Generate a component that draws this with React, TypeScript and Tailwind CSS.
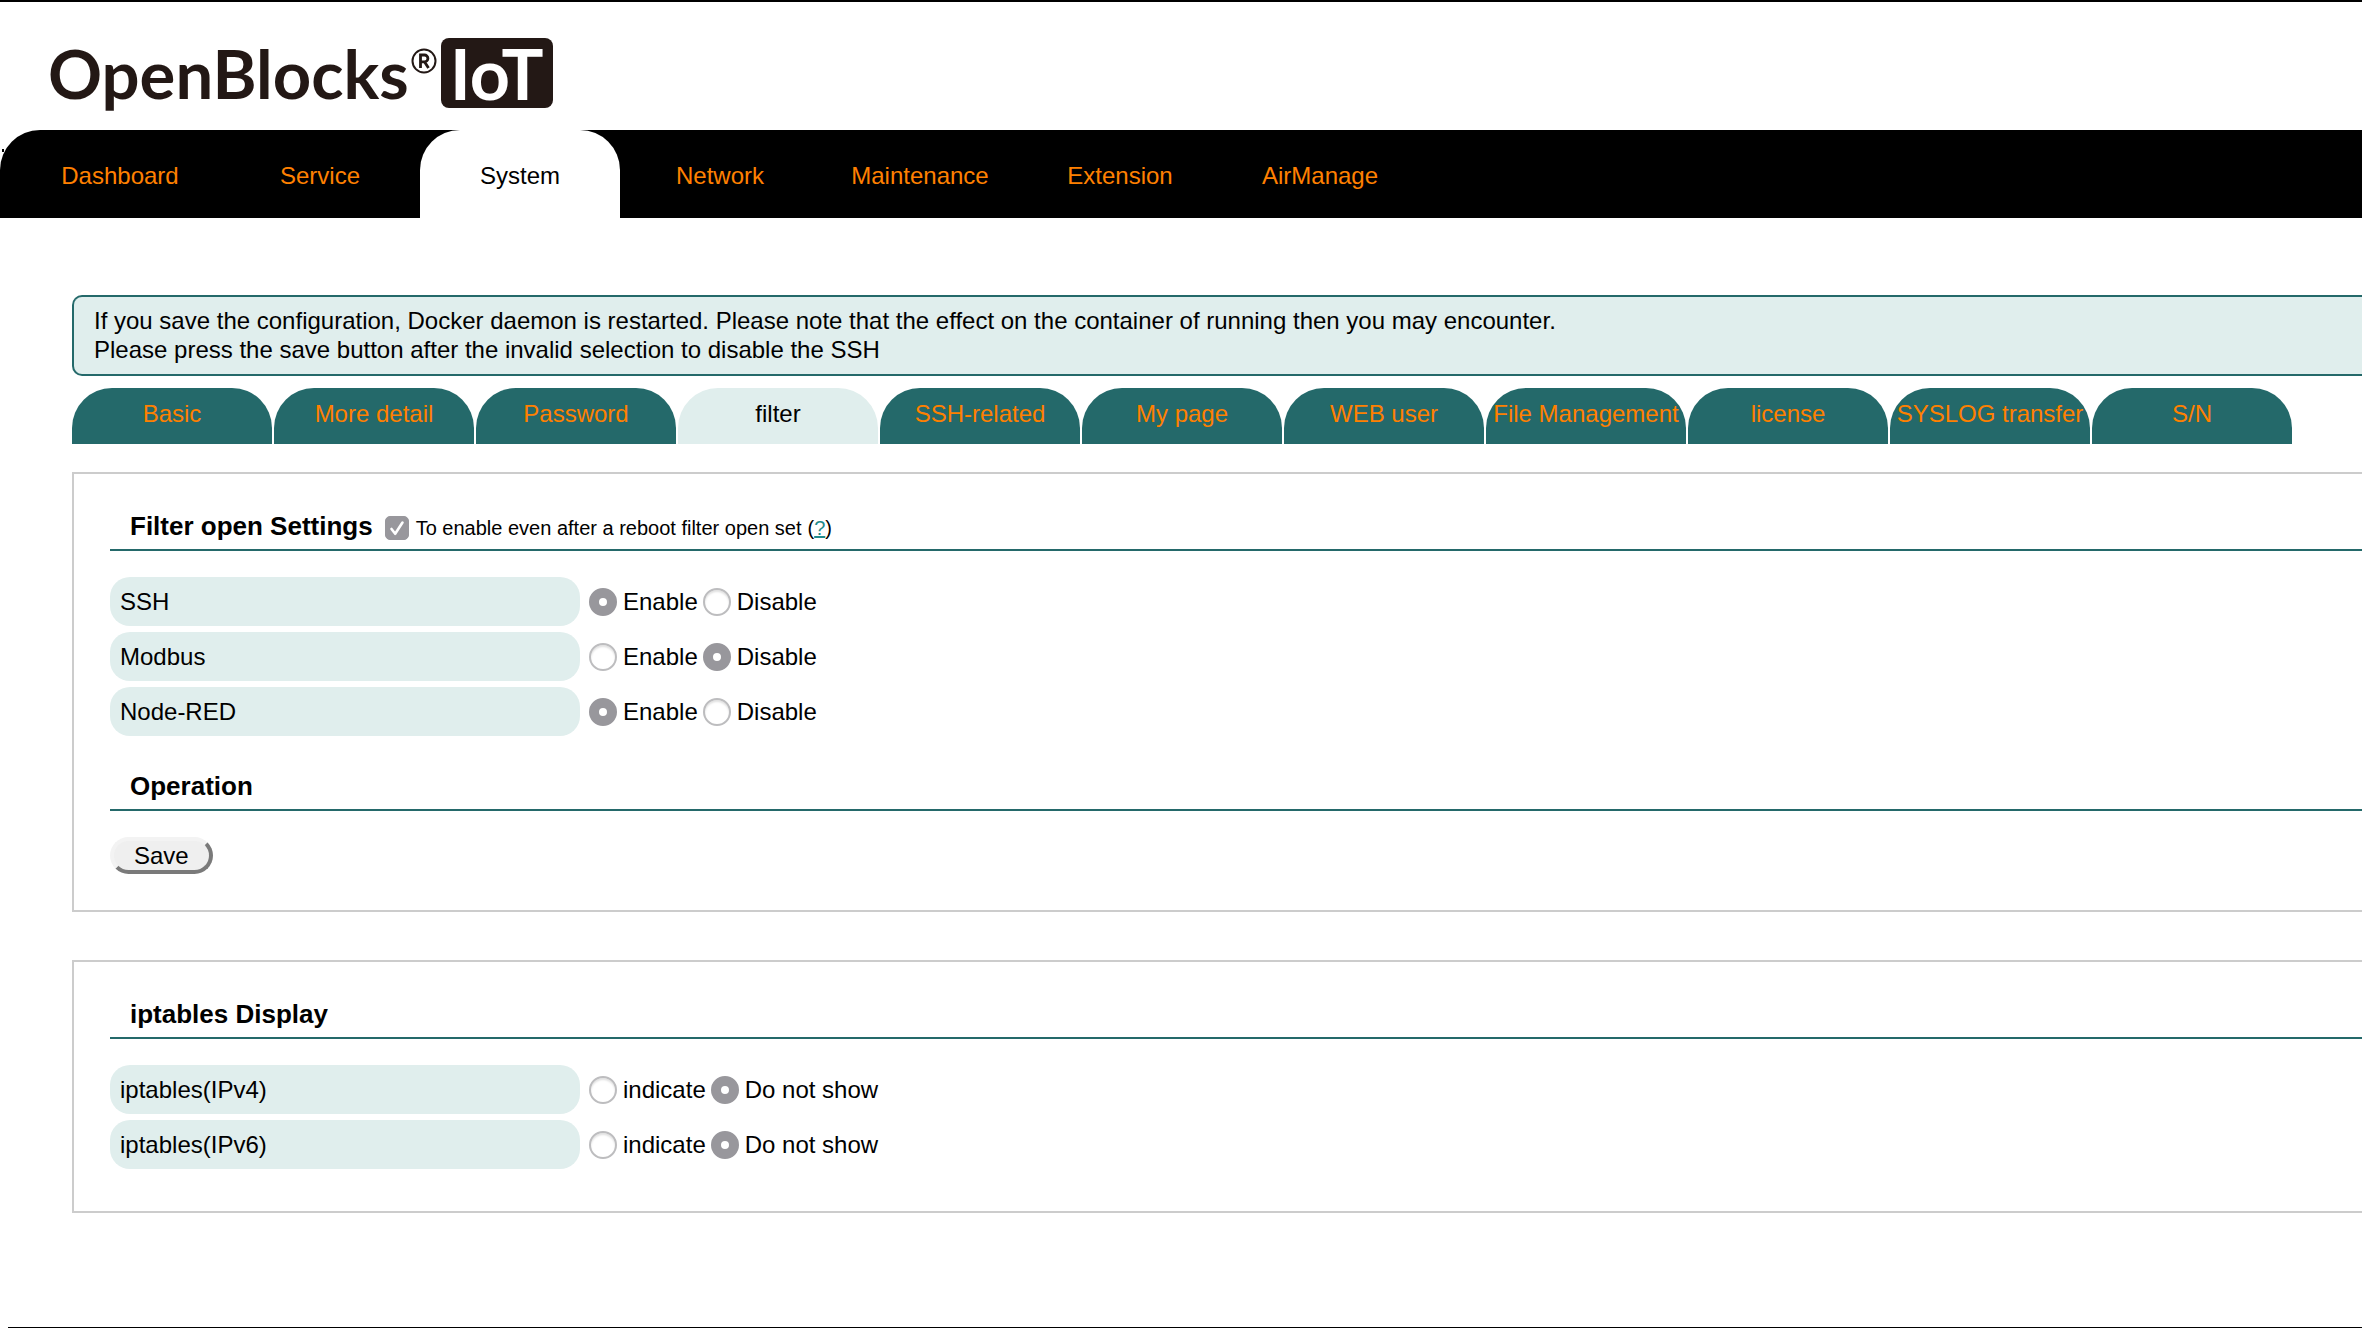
import React from "react";

const mainNav = ["Dashboard", "Service", "System", "Network", "Maintenance", "Extension", "AirManage"];

const subNav = [
  "Basic",
  "More detail",
  "Password",
  "filter",
  "SSH-related",
  "My page",
  "WEB user",
  "File Management",
  "license",
  "SYSLOG transfer",
  "S/N",
];

function Logo() {
  return (
    <a href="#home" className="flex w-fit items-start pt-9 pl-12 font-[Lato] font-bold text-[#231815]">
      <span className="text-[67px] leading-[70px]">OpenBlocks</span>
      <svg className="mt-2.5 ml-0.5 size-[26px]" viewBox="0 0 26 26" fill="none" stroke="#231815" aria-label="Registered">
        <circle cx="13" cy="13" r="11.5" strokeWidth="2" />
        <path d="M9.5 20V7h4a3.3 3.3 0 0 1 0 6.8h-4M13.5 13.8L17.5 20" strokeWidth="2.8" />
      </svg>
      <span className="ml-1 flex h-[70px] w-28 items-center justify-center rounded-lg bg-[#231815] text-[70px] leading-[70px] text-white">
        IoT
      </span>
    </a>
  );
}

function SectionHeading({ children }: { children: React.ReactNode }) {
  return (
    <div className="mb-[26px] flex h-10 items-baseline border-b-2 border-[#24696a] pl-5 leading-[30px]">
      {children}
    </div>
  );
}

function Choice({ name, label, checked }: { name: string; label: string; checked: boolean }) {
  return (
    <label className="flex items-center gap-1.5">
      <input
        type="radio"
        name={name}
        defaultChecked={checked}
        className="size-7 appearance-none rounded-full border-2 border-[#bdbdbf] bg-white shadow-[inset_0_2px_2px_#e2e2e2] checked:border-[10px] checked:border-[#98979c] checked:shadow-none"
      />
      {label}
    </label>
  );
}

function SettingRow({ title, options, value }: { title: string; options: string[]; value: number }) {
  return (
    <div role="radiogroup" aria-label={title} className="mb-1.5 flex items-center">
      <div className="flex h-[49px] w-[470px] items-center rounded-[20px] bg-[#e0eeed] pl-2.5">{title}</div>
      <div className="ml-[9px] flex gap-[5px]">
        {options.map((o, i) => (
          <Choice key={o} name={title} label={o} checked={i === value} />
        ))}
      </div>
    </div>
  );
}

function Panel({ children }: { children: React.ReactNode }) {
  return <section className="border-2 border-r-0 border-[#cccccc] pt-[37px] pb-9 pl-9">{children}</section>;
}

export default function App() {
  return (
    <div className="flex min-h-screen flex-col overflow-x-hidden border-t-2 border-black bg-white font-['Liberation_Sans',sans-serif] text-2xl leading-[29px] text-black">
      <header>
        <div className="h-32">
          <Logo />
        </div>
        <nav className="relative">
          <span className="absolute top-[19px] left-0.5 h-[3px] w-0.5 bg-black" />
          <ul className="flex h-[88px] rounded-tl-[40px] bg-black pl-5">
            {mainNav.map((item) => (
              <li key={item} className="w-[200px]">
                <a
                  href={"#" + item}
                  className={
                    item === "System"
                      ? "flex h-full items-center justify-center rounded-t-[40px] bg-white pt-0.5 text-black"
                      : "flex h-full items-center justify-center pt-0.5 text-[#ff8000]"
                  }
                >
                  {item}
                </a>
              </li>
            ))}
          </ul>
        </nav>
      </header>

      <main className="grow pt-[77px] pl-[72px]">
        <p className="rounded-l-[10px] border-2 border-r-0 border-[#24696a] bg-[#e0eeed] pt-[9px] pb-2.5 pl-5">
          If you save the configuration, Docker daemon is restarted. Please note that the effect on the container of
          running then you may encounter.
          <br />
          Please press the save button after the invalid selection to disable the SSH
        </p>

        <nav className="mt-3">
          <ul className="flex gap-0.5">
            {subNav.map((item) => (
              <li key={item} className="w-[200px] shrink-0">
                <a
                  href={"#" + item}
                  className={
                    item === "filter"
                      ? "flex h-14 justify-center rounded-t-[40px] bg-[#e0eeed] pt-[11px] whitespace-nowrap text-black"
                      : "flex h-14 justify-center rounded-t-[40px] bg-[#24696a] pt-[11px] whitespace-nowrap text-[#ff8000]"
                  }
                >
                  {item}
                </a>
              </li>
            ))}
          </ul>
        </nav>

        <div className="mt-7 flex flex-col gap-12">
          <Panel>
            <SectionHeading>
              <h2 className="text-[26px] font-bold">Filter open Settings</h2>
              <span className="ml-3 flex items-baseline text-xl leading-[30px]">
                <label className="flex items-baseline gap-[7px]">
                  <span className="relative size-6 self-center">
                    <input
                      type="checkbox"
                      defaultChecked
                      className="block size-6 appearance-none rounded-[5px] border border-[#98979c] bg-white checked:bg-[#98979c]"
                    />
                    <svg
                      className="pointer-events-none absolute inset-0"
                      viewBox="0 0 24 24"
                      fill="none"
                      stroke="white"
                      strokeWidth="2.6"
                      strokeLinecap="round"
                      strokeLinejoin="round"
                    >
                      <path d="M6.5 13L10.2 17.8L17.5 6.5" />
                    </svg>
                  </span>
                  To enable even after a reboot filter open set
                </label>
                <span className="ml-1.5">
                  (
                  <a href="#help" className="text-[#1f8a8c] underline">
                    ?
                  </a>
                  )
                </span>
              </span>
            </SectionHeading>
            <SettingRow title="SSH" options={["Enable", "Disable"]} value={0} />
            <SettingRow title="Modbus" options={["Enable", "Disable"]} value={1} />
            <SettingRow title="Node-RED" options={["Enable", "Disable"]} value={0} />
            <div className="mt-[35px]">
              <SectionHeading>
                <h2 className="text-[26px] font-bold">Operation</h2>
              </SectionHeading>
            </div>
            <button
              type="button"
              className="block rounded-[20px] border-4 border-t-[#f3f3f3] border-r-[#7a7a7a] border-b-[#7a7a7a] border-l-[#f3f3f3] bg-[#efefef] px-5"
            >
              Save
            </button>
          </Panel>

          <Panel>
            <SectionHeading>
              <h2 className="text-[26px] font-bold">iptables Display</h2>
            </SectionHeading>
            <SettingRow title="iptables(IPv4)" options={["indicate", "Do not show"]} value={1} />
            <SettingRow title="iptables(IPv6)" options={["indicate", "Do not show"]} value={1} />
          </Panel>
        </div>
      </main>

      <footer className="ml-2 border-t border-black" />
    </div>
  );
}
